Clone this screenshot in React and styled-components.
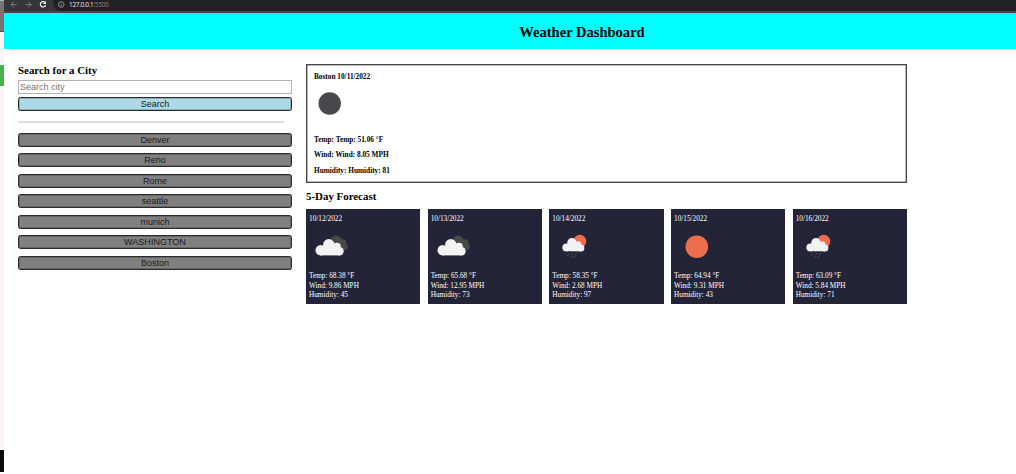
import React from "react";
import styled, { createGlobalStyle } from "styled-components";

const GlobalStyle = createGlobalStyle`
  * { box-sizing: border-box; }
  body { margin: 0; background: #fff; overflow: hidden; }
  h1, h2, p { margin: 0; }
`;

const Screen = styled.div`
  display: flex;
  width: 1016px;
  height: 474px;
  overflow: hidden;
  font-family: "Liberation Serif", "Times New Roman", serif;
  color: #000;
`;

const Edge = styled.div`
  width: 4px;
  display: flex;
  flex-direction: column;
`;

const EdgeBand = styled.div`
  height: ${(p) => p.$height}px;
  background: ${(p) => p.$color};
`;

const Page = styled.div`
  flex: 1;
  min-width: 0;
`;

const BrowserBar = styled.div`
  height: 13px;
  display: flex;
  background: #35363a;
  border-bottom: 2px solid #4b4549;
`;

const NavIcons = styled.svg`
  display: block;
  width: 49px;
  height: 11px;
`;

const AddressBar = styled.div`
  flex: 1;
  display: flex;
  align-items: flex-start;
  height: 11px;
  background: #202124;
  border-bottom-left-radius: 8px;
  font: 6.5px/9px "Open Sans", sans-serif;
  letter-spacing: -0.33px;
  color: #85878a;
`;

const InfoIcon = styled.svg`
  width: 16px;
  height: 10px;
`;

const Host = styled.span`
  color: #e8eaed;
`;

const Header = styled.header`
  height: 36px;
  display: flex;
  align-items: center;
  justify-content: center;
  background: #00ffff;
  padding: 1px 0 0 144px;
`;

const Title = styled.h1`
  font-size: 14.55px;
  line-height: 16px;
`;

const Main = styled.main`
  display: flex;
  gap: 14px;
  padding: 15px 0 0 14px;
`;

const Sidebar = styled.section`
  width: 274px;
  display: flex;
  flex-direction: column;
`;

const Heading = styled.h2`
  font-size: 10.9px;
  line-height: 12px;
`;

const SearchInput = styled.input`
  height: 14px;
  margin: 4px 0 3px;
  padding: 0 1px;
  border: 1px solid #b2b2b2;
  border-radius: 0;
  font: 9px/12px "Liberation Sans", Arial, sans-serif;
  outline: none;
  &::placeholder { color: #757575; opacity: 1; }
`;

const Button = styled.button`
  height: 14px;
  padding: 0;
  border: 1px solid #2c2c2c;
  border-radius: 2.5px;
  box-shadow: inset 0 0 0 0.5px rgba(0, 0, 0, 0.4);
  background: ${(p) => (p.$primary ? "#add8e6" : "#808080")};
  color: #1a1a1a;
  font: 9.05px/12px "Liberation Sans", Arial, sans-serif;
`;

const Divider = styled.hr`
  width: 266px;
  height: 2px;
  margin: 10px 0 10px;
  border: 0;
  background: #dcdcdc;
`;

const CityList = styled.div`
  display: flex;
  flex-direction: column;
  gap: 6.45px;
`;

const Results = styled.section`
  width: 601px;
`;

const Current = styled.div`
  height: 118.5px;
  border: 1px solid #444;
  box-shadow: inset 0 0 0 0.5px #777;
  padding: 7px 7px 0;
  font-weight: bold;
  font-size: 7.3px;
  line-height: 9px;
`;

const CurrentIcon = styled.svg`
  display: block;
  width: 29px;
  height: 29px;
  margin: 8px 0 16.9px 1px;
`;

const CurrentLine = styled.p`
  margin-bottom: 6.5px;
`;

const ForecastHeading = styled(Heading)`
  margin: 6px 0 6.2px;
  line-height: 14px;
`;

const Cards = styled.div`
  display: grid;
  grid-template-columns: repeat(5, 1fr);
  gap: 7.4px;
`;

const Card = styled.article`
  height: 95.6px;
  padding: 6.2px 3px 0;
  background: #242439;
  color: #fff;
  font-size: 7.25px;
  line-height: 9.2px;
`;

const CardIcon = styled.svg`
  display: block;
  width: 46px;
  height: 46px;
  margin: 0.4px 0 1.9px;
`;

const Clouds = () => (
  <>
    <g fill="#484848">
      <circle cx="27" cy="17" r="5.5" />
      <circle cx="33.5" cy="19.3" r="4" />
      <circle cx="35.5" cy="22.7" r="3.3" />
      <rect x="26" y="19" width="9.5" height="7" />
    </g>
    <g fill="#f2f2f2">
      <circle cx="11.7" cy="26.2" r="5.2" />
      <circle cx="19.8" cy="20.7" r="5.7" />
      <circle cx="27.8" cy="22.8" r="4" />
      <circle cx="30.5" cy="27.2" r="4.2" />
      <rect x="11" y="22" width="19.5" height="9.4" />
    </g>
  </>
);

const Rain = () => (
  <>
    <circle cx="27.8" cy="17.3" r="6.5" fill="#ec6e4c" />
    <g fill="#f2f2f2">
      <circle cx="14.3" cy="23.4" r="3.9" />
      <circle cx="19.9" cy="18.7" r="4.7" />
      <circle cx="26.1" cy="20.4" r="3.2" />
      <circle cx="28.9" cy="23.9" r="3.5" />
      <rect x="14" y="20" width="15" height="7.3" />
    </g>
    <g stroke="#55555b" strokeWidth="1" strokeLinecap="round">
      <path d="M17.1 27.3l-.2.1" stroke="#222" />
      <path d="M16.6 30.2l-.8 1.3M20.6 29.4l-.7 1.1M24.4 29.2l-.7 1.2M19.5 32.3l-.6 1.1M23 32l-.8 1.4" />
    </g>
  </>
);

const Sun = () => <circle cx="22.8" cy="22.8" r="11.3" fill="#ec6e4c" />;

const icons = { clouds: Clouds, rain: Rain, sun: Sun };

const edgeBands = [
  [1, "#b5b5b5"],
  [30, "#747474"],
  [1, "#4e4e4e"],
  [33, "#fbf5f5"],
  [21, "#4caf50"],
  [364, "#fbf5f5"],
  [22, "#0b0b0b"],
];

const cities = ["Denver", "Reno", "Rome", "seattle", "munich", "WASHINGTON", "Boston"];

const forecast = [
  { date: "10/12/2022", icon: "clouds", temp: "68.38", wind: "9.86", humidity: 45 },
  { date: "10/13/2022", icon: "clouds", temp: "65.68", wind: "12.95", humidity: 73 },
  { date: "10/14/2022", icon: "rain", temp: "58.35", wind: "2.68", humidity: 97 },
  { date: "10/15/2022", icon: "sun", temp: "64.94", wind: "9.31", humidity: 43 },
  { date: "10/16/2022", icon: "rain", temp: "63.09", wind: "5.84", humidity: 71 },
];

export default function App() {
  return (
    <Screen>
      <GlobalStyle />
      <Edge>
        {edgeBands.map(([height, color], i) => (
          <EdgeBand key={i} $height={height} $color={color} />
        ))}
      </Edge>
      <Page>
        <BrowserBar>
          <NavIcons viewBox="0 0 49 11" fill="none">
            <path d="M12.8 4.6H7.3M9.8 1.8L7 4.6l2.8 2.8M21.5 4.6h5.6M24.5 1.8l2.8 2.8-2.8 2.8" stroke="#85868a" strokeWidth=".9" />
            <path d="M41 2.4A2.7 2.7 0 1 0 41.6 5.2" stroke="#f1f1f1" strokeWidth="1.2" />
            <path d="M42 .9v3.2h-3.2z" fill="#f1f1f1" />
          </NavIcons>
          <AddressBar>
            <InfoIcon viewBox="0 0 16 10" fill="none" stroke="#a5a7aa" strokeWidth=".8">
              <circle cx="8.2" cy="4.5" r="2.8" />
              <path d="M8.2 4v2.2M8.2 2.6v.7" />
            </InfoIcon>
            <Host>127.0.0.1</Host>:5500
          </AddressBar>
        </BrowserBar>
        <Header>
          <Title>Weather Dashboard</Title>
        </Header>
        <Main>
          <Sidebar>
            <Heading>Search for a City</Heading>
            <SearchInput placeholder="Search city" />
            <Button $primary>Search</Button>
            <Divider />
            <CityList>
              {cities.map((city) => (
                <Button key={city}>{city}</Button>
              ))}
            </CityList>
          </Sidebar>
          <Results>
            <Current>
              <p>Boston 10/11/2022</p>
              <CurrentIcon viewBox="0 0 29 29">
                <circle cx="14.7" cy="14.5" r="11.2" fill="#48484a" />
              </CurrentIcon>
              <CurrentLine>Temp: Temp: 51.06 °F</CurrentLine>
              <CurrentLine>Wind: Wind: 8.05 MPH</CurrentLine>
              <CurrentLine>Humidity: Humidity: 81</CurrentLine>
            </Current>
            <ForecastHeading>5-Day Forecast</ForecastHeading>
            <Cards>
              {forecast.map((day) => {
                const Icon = icons[day.icon];
                return (
                  <Card key={day.date}>
                    <p>{day.date}</p>
                    <CardIcon viewBox="0 0 46 46">
                      <Icon />
                    </CardIcon>
                    <p>Temp: {day.temp} °F</p>
                    <p>Wind: {day.wind} MPH</p>
                    <p>Humidity: {day.humidity}</p>
                  </Card>
                );
              })}
            </Cards>
          </Results>
        </Main>
      </Page>
    </Screen>
  );
}
